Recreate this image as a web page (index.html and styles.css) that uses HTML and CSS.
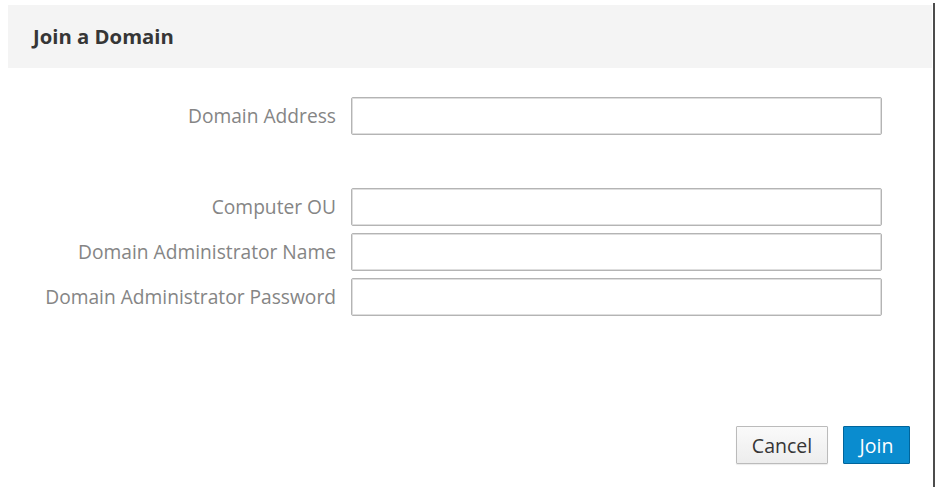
FILE: index.html
```html
<!DOCTYPE html>
<html>
<head>
<meta charset="utf-8">
<link rel="stylesheet" href="styles.css">
</head>
<body>
<div class="dialog">
  <div class="header"><h1 class="title">Join a Domain</h1></div>
  <div class="body">
    <div class="row">
      <label class="label">Domain Address</label>
      <input class="input" type="text">
    </div>
    <div class="group">
      <div class="row">
        <label class="label">Computer OU</label>
        <input class="input" type="text">
      </div>
      <div class="row">
        <label class="label">Domain Administrator Name</label>
        <input class="input" type="text">
      </div>
      <div class="row">
        <label class="label">Domain Administrator Password</label>
        <input class="input" type="password">
      </div>
    </div>
  </div>
  <div class="footer">
    <button class="btn btn-default">Cancel</button>
    <button class="btn btn-primary">Join</button>
  </div>
</div>
</body>
</html>
```
FILE: styles.css
```css
html, body {
  margin: 0;
  padding: 0;
  background: #fff;
}
body {
  font-family: "Open Sans", "Liberation Sans", sans-serif;
}
.dialog {
  margin: 3px 0 0 8px;
  width: 927px;
  height: 484px;
  border-right: 2px solid #4c4c4c;
  display: flex;
  flex-direction: column;
  box-sizing: border-box;
}
.header {
  margin-top: 2px;
  height: 63px;
  background: #f4f4f4;
  display: flex;
  align-items: center;
  padding-left: 25px;
  margin-right: 1px;
}
.title {
  margin: 0 0 2px 0;
  font-size: 20.3px;
  font-weight: 700;
  color: #363636;
}
.body {
  padding-top: 29px;
  flex: 1;
}
.group {
  margin-top: 53px;
  display: flex;
  flex-direction: column;
  gap: 7px;
}
.row {
  display: grid;
  grid-template-columns: 328px 531px;
  column-gap: 15px;
  align-items: center;
}
.label {
  text-align: right;
  font-size: 19.2px;
  color: #858585;
  padding-bottom: 1px;
}
.input {
  height: 38px;
  box-sizing: border-box;
  border: 1px solid #b4b4b4;
  border-radius: 2px;
  box-shadow: inset 0 0 0 1px #dedede;
  background: #fff;
  margin: 0;
}
.footer {
  display: flex;
  justify-content: flex-end;
  gap: 15px;
  padding-right: 23px;
  padding-bottom: 23px;
}
.btn {
  height: 38px;
  font-family: "Open Sans", "Liberation Sans", sans-serif;
  font-size: 19.5px;
  border-radius: 1px;
  box-sizing: border-box;
  padding: 0;
}
.btn-default {
  width: 92px;
  background: linear-gradient(#fafafa, #ededed);
  border: 1px solid #bbb;
  color: #363636;
  box-shadow: 0 1px 1px rgba(0,0,0,0.08);
}
.btn-primary {
  width: 67px;
  background: #0a8ccf;
  border: 1px solid #00659c;
  color: #fff;
}
```
